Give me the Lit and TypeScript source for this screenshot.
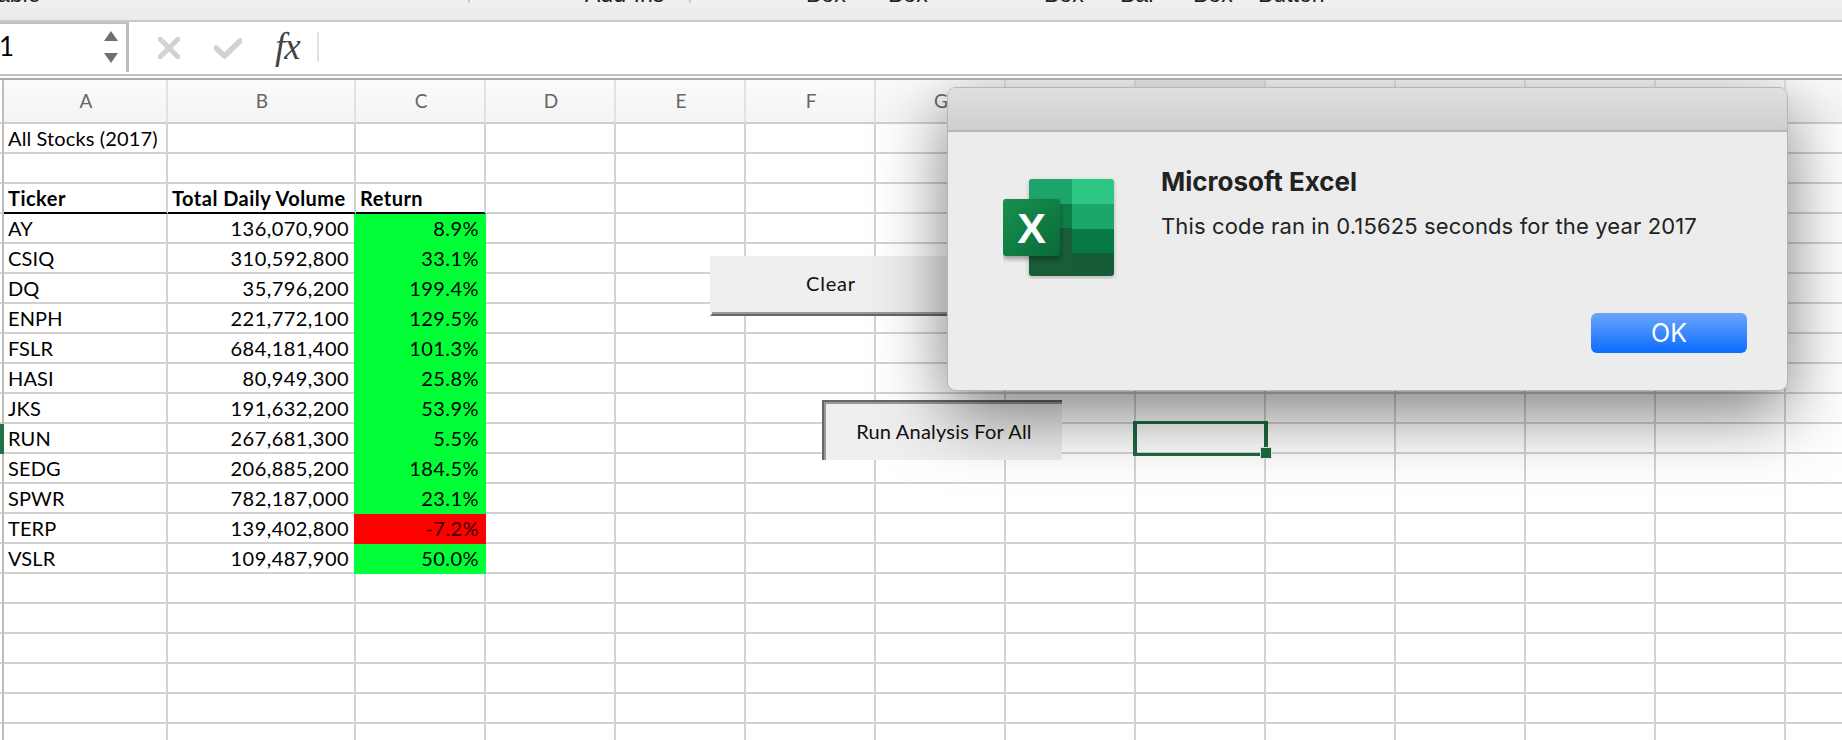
import { LitElement, html, css, svg } from "lit";
import { customElement } from "lit/decorators.js";

const DATA: [string, string, string][] = [
  ["AY", "136,070,900", "8.9%"],
  ["CSIQ", "310,592,800", "33.1%"],
  ["DQ", "35,796,200", "199.4%"],
  ["ENPH", "221,772,100", "129.5%"],
  ["FSLR", "684,181,400", "101.3%"],
  ["HASI", "80,949,300", "25.8%"],
  ["JKS", "191,632,200", "53.9%"],
  ["RUN", "267,681,300", "5.5%"],
  ["SEDG", "206,885,200", "184.5%"],
  ["SPWR", "782,187,000", "23.1%"],
  ["TERP", "139,402,800", "-7.2%"],
  ["VSLR", "109,487,900", "50.0%"],
];
const COLS = "ABCDEFGHIJKLMN".split("");
const TOTAL_ROWS = 21;

@customElement("app-root")
export class AppRoot extends LitElement {
  static styles = css`
    :host { display: block; width: 1842px; height: 740px; overflow: hidden; position: relative; background: #fff; font-family: "Lato", "Liberation Sans", sans-serif; color: #000; }
    .toolbar { height: 20px; box-sizing: content-box; border-bottom: 2px solid #c9c9c9; background: linear-gradient(#f0f0f0, #ebebeb); overflow: hidden; }
    .tools { display: grid; grid-template-columns: 468px 117px 104px 117px 82px 156px 76px 73px 65px 1fr; height: 3px; font: 23px/22px "Liberation Sans", sans-serif; color: #222; }
    .tools span { display: block; height: 3px; position: relative; }
    .tools b { font-weight: 400; display: block; margin-top: -17px; white-space: nowrap; }
    .tools .first b { margin-left: -3px; }
    .tools .sep { border-left: 2px solid #c9c9c9; }

    .formula { height: 52px; display: flex; background: #fff; }
    .name { height: 48px; border-top: 2px solid #c0c0c0; border-right: 3px solid #bdbdbd; display: flex; align-items: center; justify-content: space-between; font-size: 26px; padding-right: 8px; box-sizing: content-box; width: 118px; }
    .name .v { margin-left: -1px; margin-top: -4px; }
    .spin { display: flex; flex-direction: column; gap: 12px; margin-top: -2px; }
    .icons { margin-left: 1px; flex: 1; display: flex; align-items: center; padding-left: 28px; }
    .ic-x { margin-right: 34px; }
    .ic-c { margin-right: 33px; }
    .fx { font: italic 37px/1 "Liberation Serif", serif; color: #444; width: 42px; margin-top: -4px; letter-spacing: -1px; }
    .divider { width: 2px; height: 30px; background: #e2e2e2; margin-top: -2px; }

    .rule { height: 6px; box-sizing: border-box; border-top: 2px solid #c2c2c2; border-bottom: 2px solid #ababab; background: #fff; }

    .sheet { position: relative; height: 660px; overflow: hidden; }
    .grid { display: grid; grid-template-columns: 4px 164px 188px 130px repeat(11, 130px); grid-template-rows: 44px; grid-auto-rows: 30px; width: 1920px; }
    .grid > div { box-sizing: border-box; border-right: 2px solid #d2d2d2; border-bottom: 2px solid #d2d2d2; font-size: 20px; line-height: 28px; white-space: nowrap; }
    .grid > .head { height: 44px; background: linear-gradient(#fbfbfb, #f4f4f4); color: #666; text-align: center; border-right-color: #e2e2e2; line-height: 42px; font-size: 19px; border-bottom-color: #cfcfcf; padding-left: 2px; }
    .grid > .head.on { background: #eeeeee; }
    .grid > .strip { border-right-color: #bcbcbc; }
    .grid > .strip.on { background: #217346; border-color: #217346; }
    .grid > .strip.head { background: #fff; padding: 0; }
    .l { padding-left: 4px; letter-spacing: .13px; }
    .r { text-align: right; padding-right: 5px; letter-spacing: .45px; }
    .grid > .bold { font-weight: 700; border-bottom-color: #000; letter-spacing: .48px; }
    .grid > .pos { background: #00ff36; border-color: #00ff36; box-shadow: -2px 0 0 #00ff36; }
    .grid > .neg { background: #ff0000; border-color: #ff0000; box-shadow: -2px 0 0 #ff0000; color: #300; }

    .btn { position: absolute; box-sizing: border-box; height: 60px; display: flex; align-items: center; justify-content: center; background: #efefef; font-size: 20px; color: #111; letter-spacing: .2px; padding-left: 2px; }
    .clear { left: 710px; top: 176px; width: 240px; border-left: 2px solid #ededed; border-bottom: 2px solid #666; box-shadow: inset 0 -2px 0 #999; padding-bottom: 4px; letter-spacing: .8px; padding-left: 0; }
    .run { left: 822px; top: 320px; width: 240px; border-top: 2px solid #666; border-left: 2px solid #666; box-shadow: inset 2px 2px 0 #999; }

    .sel { position: absolute; left: 1133px; top: 341px; width: 135px; height: 35px; box-sizing: border-box; border-style: solid; border-color: #1c6b40; border-width: 3px 4px; }
    .handle { position: absolute; right: -7px; bottom: -5px; width: 10px; height: 10px; background: #1c6b40; outline: 1px solid #eee; }

    .dialog { position: absolute; left: 947px; top: 7px; width: 841px; height: 304px; box-sizing: border-box; border-radius: 9px; background: #ececec; border: 1px solid #b6b6b6; box-shadow: 0 22px 70px rgba(0,0,0,.52); overflow: hidden; font-family: "Inter", "Liberation Sans", sans-serif; color: #222; }
    .title { height: 42px; box-sizing: content-box; background: linear-gradient(#dfdfdf, #cfcfcf); border-bottom: 2px solid #b5b5b5; }
    .body { display: flex; padding: 45px 0 0 55px; }
    .logo { width: 114px; height: 102px; flex: none; display: block; }
    .copy { margin-left: 44px; }
    .copy h1 { margin: -10px 0 0; font-size: 26px; line-height: 30px; font-weight: 700; color: #222; }
    .copy p { margin: 15px 0 0; font-size: 22px; line-height: 28px; letter-spacing: .14px; white-space: nowrap; }
    .ok { position: absolute; right: 40px; bottom: 37px; width: 156px; height: 40px; border-radius: 6px; background: linear-gradient(#6ba5fb, #0a6cff); color: #fff; font-size: 25px; text-align: center; line-height: 40px; }
  `;

  private logo() {
    return svg`<svg class="logo" viewBox="0 0 114 102" xmlns="http://www.w3.org/2000/svg">
      <defs>
        <linearGradient id="tile" x1="0" y1="0" x2="1" y2="1"><stop offset="0" stop-color="#18904f"/><stop offset="1" stop-color="#0a6a38"/></linearGradient>
        <clipPath id="sq"><rect x="26" y="2" width="85" height="97" rx="3"/></clipPath>
        <filter id="soft" x="-20%" y="-20%" width="140%" height="140%"><feGaussianBlur stdDeviation="2.4"/></filter>
      </defs>
      <rect x="26" y="4" width="85" height="97" rx="3" fill="#000" opacity=".22" filter="url(#soft)"/>
      <g clip-path="url(#sq)">
        <rect x="26" y="2" width="43" height="25" fill="#1ea56b"/>
        <rect x="69" y="2" width="42" height="25" fill="#2dc685"/>
        <rect x="26" y="27" width="43" height="24" fill="#0f7c45"/>
        <rect x="69" y="27" width="42" height="25" fill="#1ba66a"/>
        <rect x="26" y="51" width="43" height="48" fill="#185c38"/>
        <rect x="69" y="52" width="42" height="24" fill="#077a44"/>
        <rect x="69" y="76" width="42" height="23" fill="#165c39"/>
      </g>
      <rect x="0" y="25" width="57" height="57" rx="3" fill="#000" opacity=".35" filter="url(#soft)"/>
      <rect x="0" y="22" width="57" height="57" rx="3" fill="url(#tile)"/>
      <text x="28.5" y="66" text-anchor="middle" font-family="Liberation Sans, sans-serif" font-weight="700" font-size="43" fill="#fff">X</text>
    </svg>`;
  }

  render() {
    const rows: unknown[] = [];
    for (let r = 1; r <= TOTAL_ROWS; r++) {
      const idx = r - 4;
      const d = idx >= 0 && DATA[idx] ? DATA[idx] : null;
      const hdr = r === 3;
      rows.push(html`<div class="strip ${d && d[0] === "RUN" ? "on" : ""}"></div>`);
      if (r === 1) {
        rows.push(html`<div class="l">All Stocks (2017)</div><div></div><div></div>`);
      } else if (hdr) {
        rows.push(html`<div class="l bold">Ticker</div><div class="l bold">Total Daily Volume</div><div class="l bold">Return</div>`);
      } else if (d) {
        rows.push(html`<div class="l">${d[0]}</div><div class="r">${d[1]}</div><div class="r ${d[2].startsWith("-") ? "neg" : "pos"}">${d[2]}</div>`);
      } else {
        rows.push(html`<div></div><div></div><div></div>`);
      }
      for (let c = 3; c < COLS.length; c++) rows.push(html`<div></div>`);
    }
    return html`
      <div class="toolbar">
        <div class="tools">
          <span class="first"><b>able</b></span>
          <span class="sep"></span>
          <span><b>Add-Ins</b></span>
          <span class="sep"></span>
          <span><b>Box</b></span>
          <span><b>Box</b></span>
          <span><b>Box</b></span>
          <span><b>Bar</b></span>
          <span><b>Box</b></span>
          <span><b>Button</b></span>
        </div>
      </div>
      <div class="formula">
        <div class="name">
          <span class="v">1</span>
          <div class="spin">
            <svg width="14" height="10" viewBox="0 0 14 10"><path d="M7 0 14 10H0Z" fill="#6f6f6f"/></svg>
            <svg width="14" height="10" viewBox="0 0 14 10"><path d="M0 0H14L7 10Z" fill="#6f6f6f"/></svg>
          </div>
        </div>
        <div class="icons">
          <svg class="ic-x" width="22" height="22" viewBox="0 0 22 22"><path d="M2 2 20 20M20 2 2 20" stroke="#d2d2d2" stroke-width="5" fill="none" stroke-linecap="round"/></svg>
          <svg class="ic-c" width="28" height="21" viewBox="0 0 28 21"><path d="M2 10 10.500 18 26 3" stroke="#d2d2d2" stroke-width="5.500" fill="none" stroke-linecap="round" stroke-linejoin="round"/></svg>
          <span class="fx">fx</span>
          <span class="divider"></span>
        </div>
      </div>
      <div class="rule"></div>
      <div class="sheet">
        <div class="grid">
          <div class="strip head"></div>
          ${COLS.map((c) => {
            const letter = c === "N" ? "" : c;
            return html`<div class="head ${c === "I" ? "on" : ""}">${letter}</div>`;
          })}
          ${rows}
        </div>
        <div class="btn clear">Clear</div>
        <div class="btn run">Run Analysis For All</div>
        <div class="sel"><div class="handle"></div></div>
        <div class="dialog">
          <div class="title"></div>
          <div class="body">
            ${this.logo()}
            <div class="copy">
              <h1>Microsoft Excel</h1>
              <p>This code ran in 0.15625 seconds for the year 2017</p>
            </div>
          </div>
          <div class="ok">OK</div>
        </div>
      </div>
    `;
  }
}
